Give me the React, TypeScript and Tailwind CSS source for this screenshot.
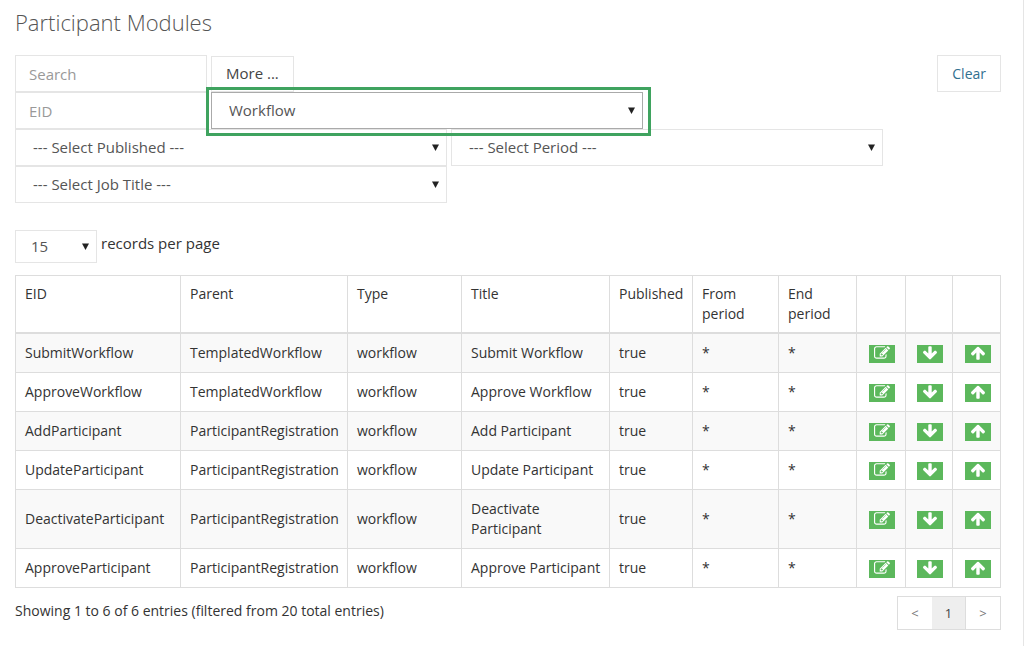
import React from 'react';

interface Module {
  eid: string;
  parent: string;
  title: string;
}

const modules: Module[] = [
  { eid: 'SubmitWorkflow', parent: 'TemplatedWorkflow', title: 'Submit Workflow' },
  { eid: 'ApproveWorkflow', parent: 'TemplatedWorkflow', title: 'Approve Workflow' },
  { eid: 'AddParticipant', parent: 'ParticipantRegistration', title: 'Add Participant' },
  { eid: 'UpdateParticipant', parent: 'ParticipantRegistration', title: 'Update Participant' },
  { eid: 'DeactivateParticipant', parent: 'ParticipantRegistration', title: 'Deactivate Participant' },
  { eid: 'ApproveParticipant', parent: 'ParticipantRegistration', title: 'Approve Participant' },
];

const columns = [
  { label: 'EID', width: 'w-[165px]' },
  { label: 'Parent', width: 'w-[167px]' },
  { label: 'Type', width: 'w-[114px]' },
  { label: 'Title', width: 'w-[148px]' },
  { label: 'Published', width: 'w-[83px]' },
  { label: 'From period', width: 'w-[86px]' },
  { label: 'End period', width: 'w-[78px]' },
  { label: '', width: 'w-[49px]' },
  { label: '', width: 'w-[47px]' },
  { label: '', width: 'w-[48px]' },
];

const icons = {
  edit: 'M888 1184l116-116-152-152-116 116v56h96v96h56zm440-720q-16-16-33 1l-350 350q-17 17-1 33t33-1l350-350q17-17 1-33zm80 594v190q0 119-84.5 203.5t-203.5 84.5h-832q-119 0-203.5-84.5t-84.5-203.5v-832q0-119 84.5-203.5t203.5-84.5h832q63 0 117 25 15 7 18 23 3 17-9 29l-49 49q-14 14-32 8-23-6-45-6h-832q-66 0-113 47t-47 113v832q0 66 47 113t113 47h832q66 0 113-47t47-113v-126q0-13 9-22l64-64q15-15 35-7t20 29zm-96-738l288 288-672 672h-288v-288zm444 132l-92 92-288-288 92-92q28-28 68-28t68 28l152 152q28 28 28 68t-28 68z',
  down: 'M1675 832q0 53-37 90l-651 652q-39 37-91 37-53 0-90-37l-651-652q-38-36-38-90 0-53 38-91l74-75q39-37 91-37 53 0 90 37l294 294v-704q0-52 38-90t90-38h128q52 0 90 38t38 90v704l294-294q37-37 90-37 52 0 91 37l75 75q37 39 37 91z',
  up: 'M1675 971q0 51-37 90l-75 75q-38 38-91 38-54 0-90-38l-294-293v704q0 52-37.5 84.5t-90.5 32.5h-128q-53 0-90.5-32.5t-37.5-84.5v-704l-294 293q-36 38-90 38t-90-38l-75-75q-38-38-38-90 0-53 38-91l651-651q35-37 90-37 54 0 91 37l651 651q37 39 37 91z',
};

const Caret = () => (
  <svg
    className="pointer-events-none absolute right-2 top-1/2 -mt-1 h-[7px] w-[7px] fill-[#222]"
    viewBox="0 0 7 7"
    aria-hidden="true"
  >
    <path d="M0 0.5h7L3.5 7z" />
  </svg>
);

interface FilterSelectProps {
  label: string;
  value: string;
  highlighted?: boolean;
}

const FilterSelect: React.FC<FilterSelectProps> = ({ label, value, highlighted = false }) => (
  <div className="relative w-[432px] max-w-full">
    <select
      aria-label={label}
      defaultValue={value}
      className={
        highlighted
          ? 'block h-[37px] w-full appearance-none border border-[#aaa] bg-white px-[17px] text-[#555]'
          : 'block h-[37px] w-full appearance-none border border-[#e5e5e5] bg-white px-[17px] text-[#555]'
      }
    >
      <option>{value}</option>
    </select>
    <Caret />
    {highlighted && (
      <div className="pointer-events-none absolute -bottom-[7px] -left-[5px] -right-2 -top-[5px] z-10 border-3 border-[#3fa35f]" />
    )}
  </div>
);

interface ActionCellProps {
  label: string;
  icon: keyof typeof icons;
}

const ActionCell: React.FC<ActionCellProps> = ({ label, icon }) => (
  <td className="border border-[#ddd] pl-0.5 pt-0.5">
    <button
      type="button"
      aria-label={label}
      className="mx-auto flex h-[18px] w-[26px] items-start justify-center bg-[#5cb85c]"
    >
      <svg viewBox="0 0 1792 1792" className="size-4 fill-white" aria-hidden="true">
        <path d={icons[icon]} />
      </svg>
    </button>
  </td>
);

const inputClass =
  'block h-[37px] w-48 border border-[#e5e5e5] bg-white px-[13px] text-[#555] placeholder:text-[#999]';
const cellClass = 'border border-[#ddd] py-[9px] pl-[9px] pr-2';

const App: React.FC = () => (
  <main className="min-h-screen border-r border-[#e5e5e5] bg-white pb-3 pl-[15px] pr-[22px] pt-1.5 font-['Open_Sans',sans-serif] text-sm text-[#333]">
    <h1 className="text-[22px] leading-8 font-light text-[#555]">Participant Modules</h1>

    <form className="mt-[17px] text-[15px]">
      <div className="flex items-start justify-between">
        <div className="flex items-start gap-1">
          <input type="text" aria-label="Search" placeholder="Search" className={inputClass} />
          <button type="button" className="mt-px h-9 border border-[#e5e5e5] bg-white px-3.5 text-[#444]">
            More ...
          </button>
        </div>
        <button type="button" className="h-[37px] border border-[#e5e5e5] bg-white px-3.5 text-sm text-[#31708f]">
          Clear
        </button>
      </div>
      <div className="flex gap-1">
        <input type="text" aria-label="EID" placeholder="EID" className={inputClass} />
        <FilterSelect label="Type" value="Workflow" highlighted />
      </div>
      <div className="flex gap-1">
        <FilterSelect label="Published" value="--- Select Published ---" />
        <FilterSelect label="Period" value="--- Select Period ---" />
      </div>
      <FilterSelect label="Job title" value="--- Select Job Title ---" />
    </form>

    <div className="mt-[27px] flex gap-1 text-[15px]">
      <div className="relative">
        <select
          id="page-size"
          defaultValue="15"
          className="block h-[33px] w-[82px] appearance-none border border-[#e5e5e5] bg-white px-[15px] text-[#555]"
        >
          <option>15</option>
        </select>
        <Caret />
      </div>
      <label htmlFor="page-size" className="leading-[26px]">
        records per page
      </label>
    </div>

    <table className="mt-3 w-full table-fixed border-collapse">
      <thead>
        <tr className="border-b-2 border-[#ddd]">
          {columns.map((column, index) => (
            <th key={index} className={`${column.width} border-x border-t border-[#ddd] py-2 pl-[9px] pr-2 text-left align-top font-normal`}>
              {column.label}
            </th>
          ))}
        </tr>
      </thead>
      <tbody>
        {modules.map((module) => (
          <tr key={module.eid} className="odd:bg-[#f9f9f9]">
            <td className={cellClass}>{module.eid}</td>
            <td className={cellClass}>{module.parent}</td>
            <td className={cellClass}>workflow</td>
            <td className={cellClass}>{module.title}</td>
            <td className={cellClass}>true</td>
            <td className={cellClass}>*</td>
            <td className={cellClass}>*</td>
            <ActionCell label={`Edit ${module.eid}`} icon="edit" />
            <ActionCell label={`Move ${module.eid} down`} icon="down" />
            <ActionCell label={`Move ${module.eid} up`} icon="up" />
          </tr>
        ))}
      </tbody>
    </table>

    <div className="mt-2 flex items-start justify-between">
      <p className="leading-[30px]">Showing 1 to 6 of 6 entries (filtered from 20 total entries)</p>
      <nav aria-label="Pagination" className="flex border border-[#ddd] text-[13px] text-[#777]">
        <button type="button" aria-label="Previous page" className="h-8 w-[34px]">
          &lt;
        </button>
        <button type="button" aria-current="page" className="h-8 w-[34px] border-r border-[#ddd] bg-[#eee] text-[#444]">
          1
        </button>
        <button type="button" aria-label="Next page" className="h-8 w-[34px]">
          &gt;
        </button>
      </nav>
    </div>
  </main>
);

export default App;
